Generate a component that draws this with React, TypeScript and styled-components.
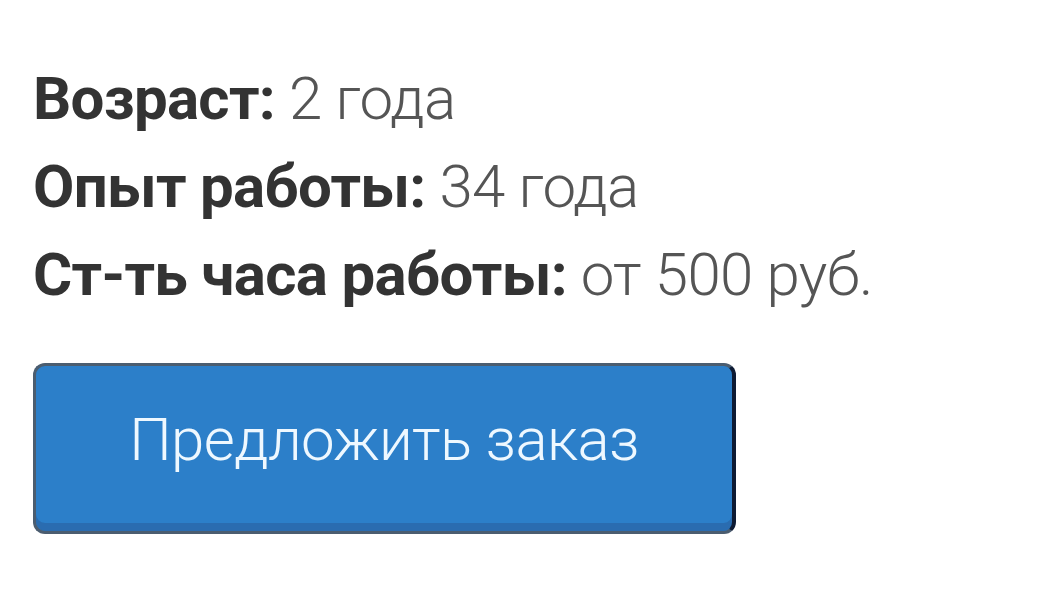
import React from 'react';
import styled, { createGlobalStyle } from 'styled-components';

const GlobalStyle = createGlobalStyle`
  html, body {
    margin: 0;
    padding: 0;
    background: #ffffff;
  }
  body {
    font-family: Roboto, "Noto Sans", sans-serif;
  }
`

const Card = styled.div`
  padding: 55px 0 0 33px;
  display: flex;
  flex-direction: column;
  align-items: flex-start;
`

const InfoList = styled.div`
  display: flex;
  flex-direction: column;
`

const InfoRow = styled.div`
  font-size: 60px;
  line-height: 88px;
  height: 88px;
  letter-spacing: -0.7px;
  color: #555;
  font-weight: 300;
  white-space: nowrap;
`

const Label = styled.b`
  font-weight: 700;
  color: #333;
`

const OrderButton = styled.button`
  margin-top: 44px;
  width: 703px;
  height: 171px;
  box-sizing: border-box;
  border: 3px solid #4b5d70;
  border-right: 4px solid #0d1a33;
  border-radius: 12px;
  background: #2c7fc9;
  box-shadow: inset 0 -8px 0 #2a6cb0;
  color: #eef8ff;
  font-family: Roboto, sans-serif;
  font-weight: 300;
  font-size: 60px;
  letter-spacing: -0.6px;
  padding: 0 0 18px;
  cursor: pointer;
`

interface Fact {
  label: string;
  value: string;
}

const facts: Fact[] = [
  { label: 'Возраст:', value: '2 года' },
  { label: 'Опыт работы:', value: '34 года' },
  { label: 'Ст-ть часа работы:', value: 'от 500 руб.' },
]

const App: React.FunctionComponent = () => {
  return <>
    <GlobalStyle />
    <Card>
      <InfoList>
        {facts.map(f => (
          <InfoRow key={f.label}>
            <Label>{f.label}</Label> {f.value}
          </InfoRow>
        ))}
      </InfoList>
      <OrderButton>Предложить заказ</OrderButton>
    </Card>
  </>
}

export default App;
